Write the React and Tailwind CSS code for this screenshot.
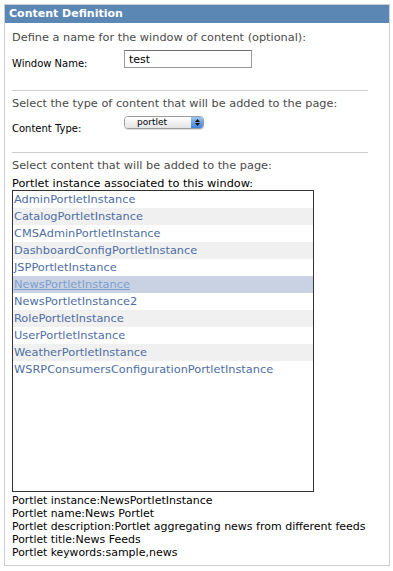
import React from 'react';

const instances = [
  'AdminPortletInstance',
  'CatalogPortletInstance',
  'CMSAdminPortletInstance',
  'DashboardConfigPortletInstance',
  'JSPPortletInstance',
  'NewsPortletInstance',
  'NewsPortletInstance2',
  'RolePortletInstance',
  'UserPortletInstance',
  'WeatherPortletInstance',
  'WSRPConsumersConfigurationPortletInstance',
];

const details = [
  ['Portlet instance:', 'NewsPortletInstance'],
  ['Portlet name:', 'News Portlet'],
  ['Portlet description:', 'Portlet aggregating news from different feeds'],
  ['Portlet title:', 'News Feeds'],
  ['Portlet keywords:', 'sample,news'],
];

const App = () => {
  const selected = 'NewsPortletInstance';

  return (
    <div className="bg-white w-[393px] h-[571px] pt-[4px] pl-[4px] font-['DejaVu_Sans',Verdana,sans-serif]">
      <div className="w-[386px] h-[562px] border border-[#cfcfcf]">
        {/* header */}
        <div className="h-[18px] bg-[#5b87b4] text-white font-bold text-[11px] leading-[18px] pl-[4px]">
          Content Definition
        </div>

        <div className="pl-[7px] pr-[21px]">
          {/* window name */}
          <p className="text-[11.3px] text-[#4a4a4a] mt-[8px] leading-[14px]">
            Define a name for the window of content (optional):
          </p>
          <div className="flex items-start mt-[5px]">
            <span className="w-[112px] text-[10px] leading-[12px] text-black mt-[8px]">Window Name:</span>
            <input
              defaultValue="test"
              className="w-[128px] h-[18px] border border-[#9a9a9a] border-t-[#6f6f6f] text-[11px] px-[4px] text-black outline-none"
            />
          </div>
          <div className="h-px bg-[#cccccc] mt-[20px]" />

          {/* content type */}
          <p className="text-[11.3px] text-[#4a4a4a] mt-[6px] leading-[14px]">
            Select the type of content that will be added to the page:
          </p>
          <div className="flex items-start mt-[5px]">
            <span className="w-[112px] text-[10px] leading-[12px] text-black mt-[7px]">Content Type:</span>
            <div className="flex w-[80px] h-[13px] rounded-[4px] border border-[#9c9c9c] overflow-hidden shadow-[0_1px_1px_rgba(0,0,0,0.15)]">
              <div className="flex-1 bg-gradient-to-b from-white to-[#e4e4e4] text-[9px] leading-[11px] text-black pl-[12px]">
                portlet
              </div>
              <div className="w-[12px] bg-gradient-to-b from-[#9cc3f1] to-[#3f82dc] flex flex-col items-center justify-center gap-[1px]">
                <svg width="5" height="3" viewBox="0 0 5 3"><path d="M2.5 0L5 3H0z" fill="#111" /></svg>
                <svg width="5" height="3" viewBox="0 0 5 3"><path d="M0 0h5L2.5 3z" fill="#111" /></svg>
              </div>
            </div>
          </div>
          <div className="h-px bg-[#cccccc] mt-[17px]" />

          {/* content list */}
          <p className="text-[11.3px] text-[#4a4a4a] mt-[6px] leading-[14px]">
            Select content that will be added to the page:
          </p>
          <p className="text-[11.3px] text-black mt-[5px] leading-[12px]">
            Portlet instance associated to this window:
          </p>
          <div className="w-[302px] h-[302px] border border-[#333] bg-white">
            {instances.map((name, i) => (
              <div
                key={name}
                className={`h-[17px] leading-[17px] text-[11.35px] pl-[1px] whitespace-nowrap ${
                  name === selected
                    ? 'bg-[#c9d2e3] text-[#7d9fcf] underline'
                    : i % 2 === 1
                    ? 'bg-[#f0f0f0] text-[#4d6ea3]'
                    : 'text-[#4d6ea3]'
                }`}
              >
                {name}
              </div>
            ))}
          </div>

          {/* details */}
          <div>
            {details.map(([label, value]) => (
              <div key={label} className="h-[13px] leading-[13px] text-black whitespace-nowrap">
                <span className="text-[10.8px]">{label}</span>
                <span className="text-[11px]">{value}</span>
              </div>
            ))}
          </div>
        </div>
      </div>
    </div>
  );
};

export default App;
